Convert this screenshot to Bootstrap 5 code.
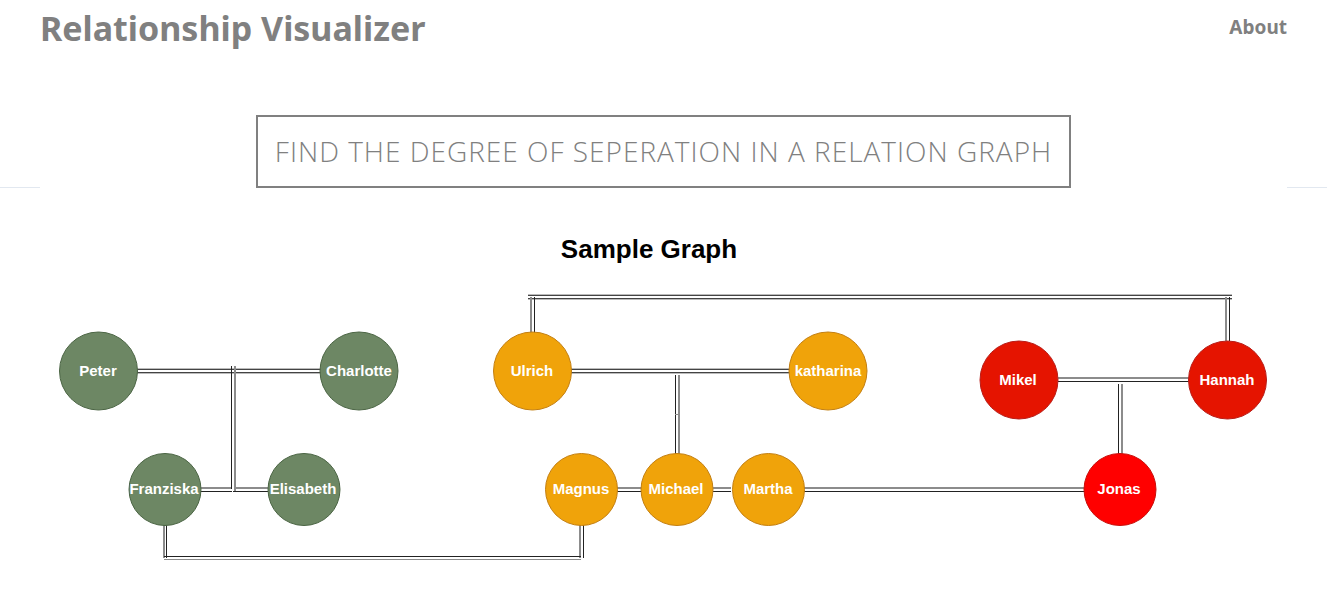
<!DOCTYPE html>
<html lang="en">
<head>
<meta charset="utf-8">
<meta name="viewport" content="width=device-width, initial-scale=1">
<title>Relationship Visualizer</title>
<link href="https://cdn.jsdelivr.net/npm/bootstrap@5.3.0/dist/css/bootstrap.min.css" rel="stylesheet">
<style>
  body { font-family: "Segoe UI", "Noto Sans", "Open Sans", sans-serif; color: #808080; background: #fff; }
  .site-bar { padding: 0 40px; height: 56px; }
  .site-title { font-size: 34px; font-weight: 700; line-height: 56px; color: #808080; }
  .site-link { font-size: 19px; font-weight: 700; line-height: 54px; color: #808080; }
  .hero-row { margin-top: 59px; }
  .hero-rule { width: 40px; height: 1px; background: #e2e8f0; }
  .hero-box { border: 2px solid #808080; padding: 17px; }
  .hero-text { font-family: "Segoe UI", "Open Sans", sans-serif; font-size: 28px; font-weight: 300; line-height: 35px; letter-spacing: 1px; }
  .graph-area { padding: 32px 40px 0; }
  .graph-area text { font-family: "Liberation Sans", Arial, sans-serif; font-weight: 700; text-anchor: middle; }
  .graph-title { font-size: 26px; fill: #000; }
  .node-name { font-size: 15px; fill: #fff; }
  .links path { fill: none; stroke: #222; stroke-width: 1; }
  .links .soft { stroke: #8c8c8c; stroke-width: 2; }
  .links .inner { stroke: #444; }
  .links .outer { stroke: #bbb; }
  .links .gray { stroke: #8c8c8c; }
  .family-green { fill: #6d8764; stroke: #4b6544; }
  .family-amber { fill: #f0a30a; stroke: #c37f12; }
  .family-red { fill: #e51400; stroke: #b81d18; }
  .family-bright { fill: #f00; stroke: #c8100c; }
</style>
</head>
<body>
<header class="site-bar d-flex justify-content-between">
  <a class="site-title text-decoration-none" href="#">Relationship Visualizer</a>
  <nav><a class="site-link text-decoration-none" href="#about">About</a></nav>
</header>
<main>
  <div class="hero-row d-flex justify-content-between align-items-end">
    <div class="hero-rule"></div>
    <div class="hero-box"><h1 class="hero-text m-0 text-uppercase text-center">Find the degree of seperation in a relation graph</h1></div>
    <div class="hero-rule"></div>
  </div>
  <section class="graph-area">
    <svg class="d-block w-100" viewBox="40 220 1247 350" role="img" aria-label="Sample Graph">
      <text class="graph-title" x="649" y="258">Sample Graph</text>
      <g class="links">
        <!-- Peter and Charlotte -->
        <path class="inner" d="M137 369.500H321M137 372.500H321"/>
        <path class="outer" d="M137 368.500H321M137 373.500H321"/>
        <path d="M231.500 366V489M200 491.500H232M233 491.500H268"/>
        <path class="soft" d="M235 366V491M200 488H231M234 488H268"/>
        <!-- Franziska and Magnus -->
        <path class="soft" d="M164 525V558M580 525V558"/>
        <path d="M166.500 525V558M583.500 525V558M164 556.500H581"/>
        <path class="gray" d="M164 559.500H581"/>
        <!-- Ulrich and Hannah -->
        <path class="inner" d="M528 295.500H1232M528 298.500H1232"/>
        <path class="outer" d="M528 294.500H1232M528 299.500H1232"/>
        <path class="soft" d="M531 297V333M1226 297V341"/>
        <path d="M534.500 297V333M1229.500 297V341"/>
        <!-- Ulrich and katharina -->
        <path class="inner" d="M571 369.500H790M571 372.500H790"/>
        <path class="outer" d="M571 368.500H790M571 373.500H790"/>
        <path d="M675.500 375V455"/><path class="soft" d="M679 375V455"/>
        <path class="gray" d="M675 414.500H680"/>
        <!-- Mikel and Hannah -->
        <path class="soft" d="M1058 378H1189"/><path d="M1058 381.500H1189"/>
        <path d="M1118.500 384V455"/><path class="soft" d="M1122 384V455"/>
        <!-- Lower row -->
        <path class="soft" d="M617 488H642M713 488H731M804 488H1085"/>
        <path d="M617 491.500H642M713 491.500H731M804 491.500H1085"/>
      </g>
      <g class="family-green">
        <circle cx="98.500" cy="371" r="39"/><circle cx="359" cy="371" r="39"/>
        <circle cx="165" cy="489.500" r="36"/><circle cx="304" cy="489.500" r="36"/>
      </g>
      <g class="family-amber">
        <circle cx="532.500" cy="371" r="39"/><circle cx="828" cy="371" r="39"/>
        <circle cx="581.500" cy="489.500" r="36"/><circle cx="677" cy="489.500" r="36"/><circle cx="768.500" cy="489.500" r="36"/>
      </g>
      <g class="family-red"><circle cx="1019" cy="380" r="39"/><circle cx="1227.500" cy="380" r="39"/></g>
      <g class="family-bright"><circle cx="1120" cy="489.500" r="36"/></g>
      <g class="node-name">
        <text x="98" y="376">Peter</text><text x="359" y="376">Charlotte</text>
        <text x="164" y="494">Franziska</text><text x="303" y="494">Elisabeth</text>
        <text x="532" y="376">Ulrich</text><text x="828" y="376">katharina</text>
        <text x="581" y="494">Magnus</text><text x="676" y="494">Michael</text><text x="768" y="494">Martha</text>
        <text x="1018" y="385">Mikel</text><text x="1227" y="385">Hannah</text><text x="1119" y="494">Jonas</text>
      </g>
    </svg>
  </section>
</main>
<script src="https://cdn.jsdelivr.net/npm/bootstrap@5.3.0/dist/js/bootstrap.bundle.min.js"></script>
</body>
</html>
